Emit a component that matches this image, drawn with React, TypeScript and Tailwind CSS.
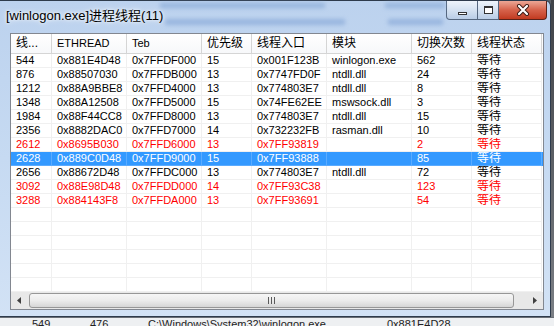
import React from "react";

type Tone = "normal" | "red" | "sel";

const rows: { c: string[]; tone: Tone }[] = [
  { c: ["544", "0x881E4D48", "0x7FFDF000", "15", "0x001F123B", "winlogon.exe", "562", "等待"], tone: "normal" },
  { c: ["876", "0x88507030", "0x7FFDB000", "13", "0x7747FD0F", "ntdll.dll", "24", "等待"], tone: "normal" },
  { c: ["1212", "0x88A9BBE8", "0x7FFD4000", "13", "0x774803E7", "ntdll.dll", "8", "等待"], tone: "normal" },
  { c: ["1348", "0x88A12508", "0x7FFD5000", "15", "0x74FE62EE", "mswsock.dll", "3", "等待"], tone: "normal" },
  { c: ["1984", "0x88F44CC8", "0x7FFD8000", "13", "0x774803E7", "ntdll.dll", "15", "等待"], tone: "normal" },
  { c: ["2356", "0x8882DAC0", "0x7FFD7000", "14", "0x732232FB", "rasman.dll", "10", "等待"], tone: "normal" },
  { c: ["2612", "0x8695B030", "0x7FFD6000", "13", "0x7FF93819", "", "2", "等待"], tone: "red" },
  { c: ["2628", "0x889C0D48", "0x7FFD9000", "15", "0x7FF93888", "", "85", "等待"], tone: "sel" },
  { c: ["2656", "0x88672D48", "0x7FFDC000", "13", "0x774803E7", "ntdll.dll", "72", "等待"], tone: "normal" },
  { c: ["3092", "0x88E98D48", "0x7FFDD000", "14", "0x7FF93C38", "", "123", "等待"], tone: "red" },
  { c: ["3288", "0x884143F8", "0x7FFDA000", "13", "0x7FF93691", "", "54", "等待"], tone: "red" },
];

const headers = ["线...", "ETHREAD", "Teb", "优先级", "线程入口", "模块", "切换次数", "线程状态"];

const grid = "grid grid-cols-[41px_75px_75px_50px_75px_85px_60px_70px]";

const isCjk = (s: string) => /[\u4e00-\u9fff]/.test(s);

function Cell({ text, tone }: { text: string; tone: Tone }) {
  const line = tone === "sel" ? "border-[#5aabff]" : "border-[#f0f0f0]";
  return (
    <div className={`h-[14px] border-r border-b ${line} pl-[5px] leading-[13px] whitespace-nowrap overflow-hidden`}>
      <span className={isCjk(text) ? "text-[12px]" : ""}>{text}</span>
    </div>
  );
}

function Scrollbar() {
  return (
    <div className="flex h-[17px] bg-[#e8e8e8]">
      <div className="w-[17px] flex items-center justify-center">
        <svg width="5" height="7" viewBox="0 0 5 7">
          <polygon points="4,0 4,7 0,3.5" fill="#404040" />
        </svg>
      </div>
      <div className="flex-1 flex py-[1px]">
        <div className="ml-[1px] w-[485px] rounded-[3px] border border-[#979797] bg-gradient-to-b from-[#f6f6f6] via-[#ececec] to-[#d6d6d6] flex items-center justify-center gap-[2px]">
          <div className="w-[1px] h-[7px] bg-[#5a5a5a]" />
          <div className="w-[1px] h-[7px] bg-[#5a5a5a]" />
          <div className="w-[1px] h-[7px] bg-[#5a5a5a]" />
        </div>
      </div>
      <div className="w-[17px] flex items-center justify-center">
        <svg width="5" height="7" viewBox="0 0 5 7">
          <polygon points="1,0 1,7 5,3.5" fill="#404040" />
        </svg>
      </div>
    </div>
  );
}

function TitleButtons() {
  return (
    <div className="flex mr-[3px]">
      <div className="w-[32px] h-[19px] rounded-bl-[4px] border border-t-0 border-[#55677f] bg-gradient-to-b from-[#eef4fb] via-[#d5e2f1] to-[#b9cde6] flex items-end justify-center pb-[4px]">
        <div className="w-[9px] h-[3px] border border-[#333] bg-white" />
      </div>
      <div className="w-[21px] h-[19px] border-b border-r border-[#55677f] bg-gradient-to-b from-[#eef4fb] via-[#d5e2f1] to-[#b9cde6] flex items-center justify-center">
        <div className="w-[9px] h-[8px] border border-t-2 border-[#333] bg-white" />
      </div>
      <div className="w-[48px] h-[19px] rounded-br-[4px] border border-t-0 border-l-0 border-[#5b2219] bg-gradient-to-b from-[#eba796] via-[#d6624b] to-[#c23a1f] flex items-center justify-center">
        <svg width="14" height="12" viewBox="0 0 14 12">
          <path d="M3 2 L11 10 M11 2 L3 10" stroke="#3a1a14" strokeWidth="4" strokeLinecap="round" />
          <path d="M3 2 L11 10 M11 2 L3 10" stroke="#ffffff" strokeWidth="2.2" strokeLinecap="round" />
        </svg>
      </div>
    </div>
  );
}

export default function App() {
  const emptyRows = Array.from({ length: 6 });
  return (
    <div className="w-[554px] h-[326px] overflow-hidden flex flex-col bg-[#5d6167] font-['Liberation_Sans','Noto_Sans_CJK_SC',sans-serif]">
      <div className="flex">
        <div className="w-[551px] h-[317px] flex flex-col border-t border-r border-b border-[#2e3b4c] rounded-tr-[6px] bg-gradient-to-b from-[#bcd2ee] via-[#c6daf2] to-[#d2e2f5]">
          <div className="relative h-[32px] flex items-start">
            <div className="absolute left-[160px] top-[2px] w-[165px] h-[5px] bg-[#86a8d6] blur-[2px] opacity-70 pointer-events-none" />
            <div className="absolute left-[385px] top-[2px] w-[60px] h-[5px] bg-[#86a8d6] blur-[2px] opacity-70 pointer-events-none" />
            <div className="absolute left-[165px] top-[18px] w-[180px] h-[6px] bg-[#7fa2d4] blur-[2px] opacity-60 pointer-events-none" />
            <div className="absolute left-[388px] top-[18px] w-[55px] h-[6px] bg-[#7fa2d4] blur-[2px] opacity-60 pointer-events-none" />
            <div className="relative flex-1 pl-[6px] mt-[7px] text-[13px] leading-[16px] text-black [text-shadow:0_0_6px_#fff,0_0_3px_#fff]">
              [winlogon.exe]进程线程(11)
            </div>
            <TitleButtons />
          </div>
          <div className="pl-[10px]">
            <div className="w-[534px] border border-[#828790] bg-white text-[11px] text-black">
              <div className={`${grid} border-b border-[#d5d5d5] bg-gradient-to-b from-white to-[#f7f8fa]`}>
                {headers.map((h) => (
                  <div key={h} className="h-[19px] border-r border-[#d5d5d5] pl-[5px] leading-[19px] whitespace-nowrap overflow-hidden">
                    <span className={isCjk(h) ? "text-[12px]" : ""}>{h}</span>
                  </div>
                ))}
              </div>
              <div className="flex flex-col">
                {rows.map((r) => (
                  <div
                    key={r.c[0]}
                    className={`${grid} ${r.tone === "sel" ? "bg-[#3399ff] text-white" : r.tone === "red" ? "text-[#f00]" : ""}`}
                  >
                    {r.c.map((t, i) => (
                      <Cell key={i} text={t} tone={r.tone} />
                    ))}
                  </div>
                ))}
                {emptyRows.map((_, k) => (
                  <div key={k} className={grid}>
                    {headers.map((h) => (
                      <Cell key={h} text="" tone="normal" />
                    ))}
                  </div>
                ))}
              </div>
              <Scrollbar />
            </div>
          </div>
        </div>
        <div className="flex-1 bg-gradient-to-b from-[#3f4247] to-[#7b7f85]" />
      </div>
      <div className="h-[9px] overflow-hidden bg-[#eef0f2] border-t border-[#6a6f76]">
        <div className="grid grid-cols-[32px_58px_58px_239px_auto] text-[11px] leading-[14px] text-[#222] -mt-[1px]">
          <div />
          <div>549</div>
          <div>476</div>
          <div>C:\Windows\System32\winlogon.exe</div>
          <div>0x881E4D28</div>
        </div>
      </div>
    </div>
  );
}
